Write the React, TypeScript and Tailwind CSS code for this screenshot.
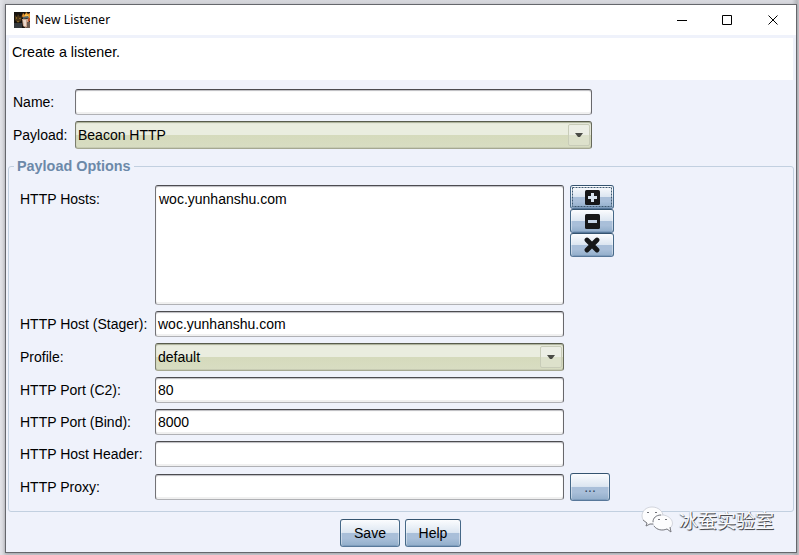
import React from "react";

const fieldClass =
  "box-border rounded-[3px] border border-t-[#4c4c50] border-l-[#727276] border-r-[#68686c] border-b-[#b0b1b5] bg-white shadow-[inset_0_1px_1px_#bcbcc0,inset_0_-2px_0_#f0f0f0] pl-[2px] flex items-center whitespace-nowrap";

function Field({ value = "", className = "" }: { value?: string; className?: string }) {
  return <div className={`${fieldClass} h-[26px] ${className}`}>{value}</div>;
}

function Combo({ value, className }: { value: string; className: string }) {
  return (
    <div
      className={`box-border flex h-[28px] items-center justify-between rounded-[3px] border border-t-[#585b4c] border-l-[#7b7e6d] border-r-[#66695a] border-b-[#a5a891] bg-[linear-gradient(#eaeddf_0px,#eaeddf_13px,#d5dabc_13px,#d8ddc2_100%)] pl-[2px] pr-px shadow-[inset_0_1px_1px_#a9ad96,inset_0_-1px_0_#c7cbb3] ${className}`}
    >
      <span>{value}</span>
      <span className="flex h-[22px] w-[22px] items-center justify-center rounded-[2px] border border-[#c8ccb8] bg-[linear-gradient(#eceee5_50%,#dde1cb_50%)]">
        <svg width="8" height="4" viewBox="0 0 8 4" className="block">
          <path d="M0 0H8L5 4H3Z" fill="#4a4b46" />
        </svg>
      </span>
    </div>
  );
}

function Button({
  children,
  className,
  focused = false,
}: {
  children: React.ReactNode;
  className: string;
  focused?: boolean;
}) {
  return (
    <div
      className={`relative box-border flex shrink-0 items-center justify-center rounded-[3px] border border-t-[#34536f] border-l-[#456887] border-r-[#456887] border-b-[#58789a] bg-[linear-gradient(#fbfcfe_0%,#dce6f1_48%,#a9bfd9_51%,#a9bfd9_70%,#91adca_100%)] shadow-[inset_1px_0_0_#ffffff66,inset_-1px_0_0_#ffffff66,inset_0_-1px_0_#7f9dbd] ${className}`}
    >
      {focused && (
        <svg width="40" height="20" viewBox="0 0 40 20" className="absolute left-px top-px block">
          <rect x=".5" y=".5" width="39" height="19" fill="none" stroke="#3d5870" strokeDasharray="2 1" />
        </svg>
      )}
      {children}
    </div>
  );
}

function Row({ label, className, children }: { label: string; className: string; children: React.ReactNode }) {
  return (
    <div className={`flex items-center ${className}`}>
      <span className="w-[135px] shrink-0 whitespace-nowrap">{label}</span>
      {children}
    </div>
  );
}

function AppIcon() {
  return (
    <svg width="16" height="16" viewBox="0 0 16 16" className="block">
      <path fill="#17130f" d="M0 0H16V16H0Z" />
      <path fill="#4b3517" d="M1 3L3 5L4 2L6 5L8 3L7 9L4 11L1 8Z" />
      <path fill="#806124" d="M2 5H3V7H2ZM5 6H7V7H5ZM3 9H5V10H3Z" />
      <path fill="#34383c" d="M0 11H8V16H0Z" />
      <path fill="#e6932f" d="M9 1L11 3L12 0L14 2L16 1V8L13 6L9 6L8 4Z" />
      <path fill="#f4c54e" d="M11 2L14 3L15 5L11 4Z" />
      <path fill="#53656d" d="M9 5L14 4L15 6L9 7Z" />
      <path fill="#c9a48c" d="M8 7H15L15 13L12 16L9 14Z" />
      <path fill="#ead8cc" d="M9 8H12V14H10Z" />
      <path fill="#b6502b" d="M14 6H16V9L14 10Z" />
      <path fill="#6b5a50" d="M13 10H16V16H13Z" />
    </svg>
  );
}

function Watermark() {
  return (
    <div className="absolute left-[641px] top-[506px] flex items-center">
      <svg width="32" height="28" viewBox="0 0 32 28" className="block">
        <g fill="#fdfdfe" stroke="#c3c6ce" strokeWidth=".7">
          <path d="M11 1C5 1 1 5 1 10C1 13 3 16 6 17L5 20L9 18C17 20 22 16 22 10C22 5 17 1 11 1Z" />
          <path d="M21 9C15 9 12 12 12 16C12 21 16 24 22 24L26 23L30 26L29 22C35 17 29 9 21 9Z" />
        </g>
        <path
          d="M2 14L6 17L5 20L9 18L12 18M12 16C12 12 15 9 20 9M13 20C16 24 21 25 26 23L30 26L29 21"
          fill="none"
          stroke="#76777d"
          strokeWidth=".9"
        />
        <g fill="none" stroke="#707178" strokeWidth="1">
          <path d="M6 7Q7 5 8 7M14 7Q15 5 16 7M17 14Q18 12 19 14M24 14Q25 12 26 14" />
        </g>
      </svg>
      <span className="ml-[6px] whitespace-nowrap font-['Noto_Sans_CJK_SC',sans-serif] text-[19px] leading-[28px] text-[#fafafb] [text-shadow:1px_1px_0_#4c4d51,0_1px_1px_#75767b]">
        冰蚕实验室
      </span>
    </div>
  );
}

export default function App() {
  return (
    <div className="relative box-border h-[555px] w-[799px] overflow-hidden bg-[linear-gradient(90deg,#e2e3e8,#d4d5da_5px,#d8d9df_792px,#b5b6bb_797px,#c7c8cd)] pl-[5px] pt-[4px] font-['Liberation_Sans',Arial,sans-serif] text-[14px] leading-[18px] text-black">
      <div className="box-border flex h-[549px] w-[792px] flex-col border border-[#65676c] bg-[#eff2fb] shadow-[0_1px_3px_#9b9ca1]">
        <div className="flex h-[30px] shrink-0 items-center bg-white pl-[8px]">
          <AppIcon />
          <span className="ml-[5px] font-['Noto_Sans','Open_Sans',sans-serif] text-[12px] tracking-[0.15px] text-black">
            New Listener
          </span>
          <svg width="102" height="12" viewBox="0 0 102 12" className="ml-auto mr-[17px] block" fill="none" stroke="#000">
            <path d="M0 6.5H10M45.5 1.5H54.5V10.5H45.5Z" />
            <path d="M91.5 1.5L100.5 10.5M100.5 1.5L91.5 10.5" />
          </svg>
        </div>
        <div className="mx-[3px] mt-[3px] h-[42px] shrink-0 bg-white pl-[3px] pt-[5px] text-[14.3px]">
          Create a listener.
        </div>
        <div className="mt-[9px] flex h-[26px] shrink-0 items-center pl-[7px]">
          <span className="w-[62px]">Name:</span>
          <Field className="w-[517px]" />
        </div>
        <div className="mt-[6px] flex h-[28px] shrink-0 items-center pl-[7px]">
          <span className="w-[62px]">Payload:</span>
          <Combo value="Beacon HTTP" className="w-[517px]" />
        </div>
        <fieldset className="ml-[2px] mt-[8px] box-border h-[355px] w-[786px] shrink-0 rounded-[3px] border border-[#c2d0e0] pl-[11px]">
          <legend className="-ml-[6px] h-[18px] px-[3px] text-[14.4px] font-bold text-[#6c89a9]">Payload Options</legend>
          <div className="mt-[10px] flex h-[120px]">
            <span className="w-[135px] pt-[5px]">HTTP Hosts:</span>
            <div className={`${fieldClass} h-[120px] w-[409px] !items-start !pl-[3px] pt-[4px]`}>woc.yunhanshu.com</div>
            <div className="ml-[6px] flex flex-col">
              <Button className="h-[24px] w-[44px]" focused>
                <svg width="15" height="15" viewBox="0 0 15 15" className="block">
                  <rect width="15" height="15" rx="1.5" fill="#171819" />
                  <path d="M7.5 3V12M3 7.5H12" stroke="#d8e3ef" strokeWidth="3" />
                </svg>
              </Button>
              <Button className="h-[24px] w-[44px]">
                <svg width="15" height="15" viewBox="0 0 15 15" className="block">
                  <rect width="15" height="15" rx="1.5" fill="#171819" />
                  <path d="M3 7.5H12" stroke="#c5d4e5" strokeWidth="3" />
                </svg>
              </Button>
              <Button className="h-[24px] w-[44px]">
                <svg width="16" height="16" viewBox="0 0 16 16" className="block">
                  <path d="M3 3L13 13M13 3L3 13" stroke="#171819" strokeWidth="4.8" strokeLinecap="round" />
                </svg>
              </Button>
            </div>
          </div>
          <Row label="HTTP Host (Stager):" className="mt-[6px] h-[26px]">
            <Field value="woc.yunhanshu.com" className="w-[409px]" />
          </Row>
          <Row label="Profile:" className="mt-[6px] h-[28px]">
            <Combo value="default" className="w-[409px]" />
          </Row>
          <Row label="HTTP Port (C2):" className="mt-[6px] h-[26px]">
            <Field value="80" className="w-[409px]" />
          </Row>
          <Row label="HTTP Port (Bind):" className="mt-[6px] h-[26px]">
            <Field value="8000" className="w-[409px]" />
          </Row>
          <Row label="HTTP Host Header:" className="mt-[6px] h-[26px]">
            <Field className="w-[409px]" />
          </Row>
          <Row label="HTTP Proxy:" className="mt-[6px] h-[28px]">
            <Field className="w-[409px]" />
            <Button className="ml-[6px] h-[28px] w-[40px] text-[#33475e]">...</Button>
          </Row>
        </fieldset>
        <div className="mt-[7px] flex gap-[5px] pl-[334px]">
          <Button className="h-[28px] w-[60px]">Save</Button>
          <Button className="h-[28px] w-[56px]">Help</Button>
        </div>
      </div>
      <Watermark />
    </div>
  );
}
